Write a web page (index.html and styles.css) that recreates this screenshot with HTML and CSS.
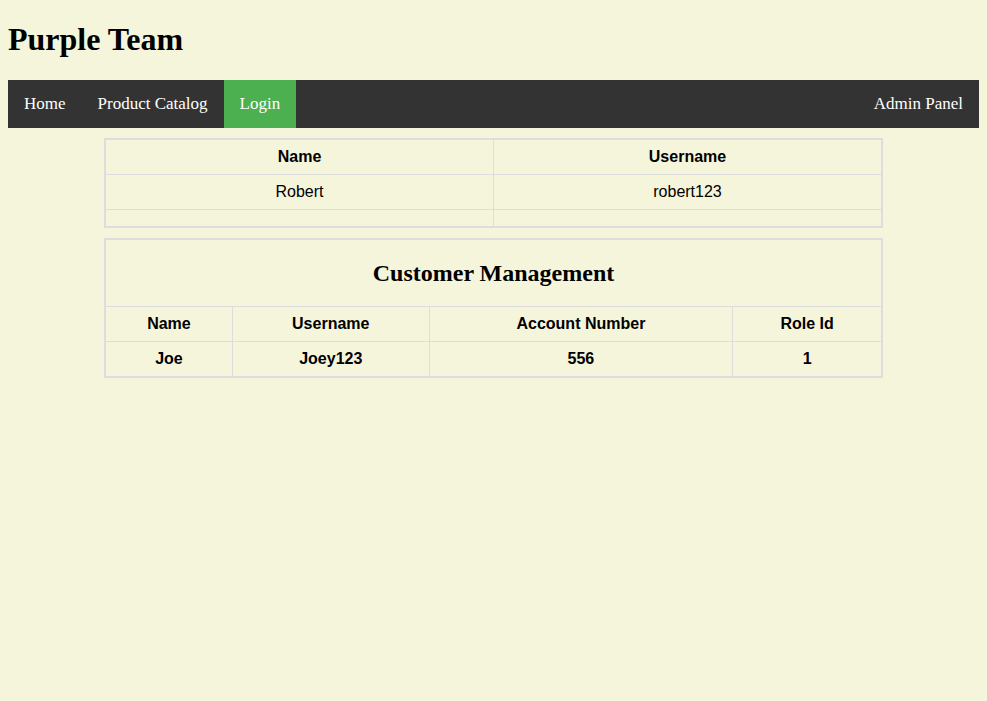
FILE: index.html
```html
<!DOCTYPE html>
<html>
<head>
<meta charset="utf-8">
<link rel="stylesheet" href="styles.css">
</head>
<body>
<h1 class="title">Purple Team</h1>
<nav class="nav">
  <a class="nav-item" href="#">Home</a>
  <a class="nav-item" href="#">Product Catalog</a>
  <a class="nav-item active" href="#">Login</a>
  <a class="nav-item right" href="#">Admin Panel</a>
</nav>
<table class="grid users">
  <tr><th class="half">Name</th><th class="half">Username</th></tr>
  <tr><td>Robert</td><td>robert123</td></tr>
  <tr><td class="empty"></td><td class="empty"></td></tr>
</table>
<table class="grid customers">
  <tr><th colspan="4" class="heading"><h2>Customer Management</h2></th></tr>
  <tr><th class="c1">Name</th><th class="c2">Username</th><th class="c3">Account Number</th><th class="c4">Role Id</th></tr>
  <tr><th>Joe</th><th>Joey123</th><th>556</th><th>1</th></tr>
</table>
</body>
</html>
```

FILE: styles.css
```css
body {
  margin: 8px;
  background: #f5f5dc;
  font-family: "Liberation Serif", "Times New Roman", serif;
  color: #000;
}
.title {
  font-size: 32px;
  font-weight: bold;
  margin: 13.44px 0 21.44px;
}
.nav {
  display: flex;
  background: #333;
  height: 48px;
}
.nav-item {
  display: block;
  color: #fff;
  text-decoration: none;
  font-size: 17px;
  line-height: 20px;
  padding: 14px 16px;
}
.nav-item.active {
  background: #4caf50;
}
.nav-item.right {
  margin-left: auto;
}
.grid {
  width: 779px;
  margin: 10px auto;
  border-collapse: collapse;
  border: 2px solid #ddd;
  font-family: "Liberation Sans", Arial, sans-serif;
  font-size: 16px;
}
.grid th, .grid td {
  border: 1px solid #ddd;
  padding: 8px;
  text-align: center;
  line-height: 18px;
}
.grid .half {
  width: 50%;
}
.grid td.empty {
  padding: 0;
  height: 16px;
}
.grid .heading {
  padding: 19px 8px;
}
.grid h2 {
  margin: 0;
  font-family: "Liberation Serif", "Times New Roman", serif;
  font-size: 24px;
  line-height: 28px;
}
.c1 { width: 110px; }
.c2 { width: 180px; }
.c3 { width: 287px; }
.c4 { width: 132px; }
```
